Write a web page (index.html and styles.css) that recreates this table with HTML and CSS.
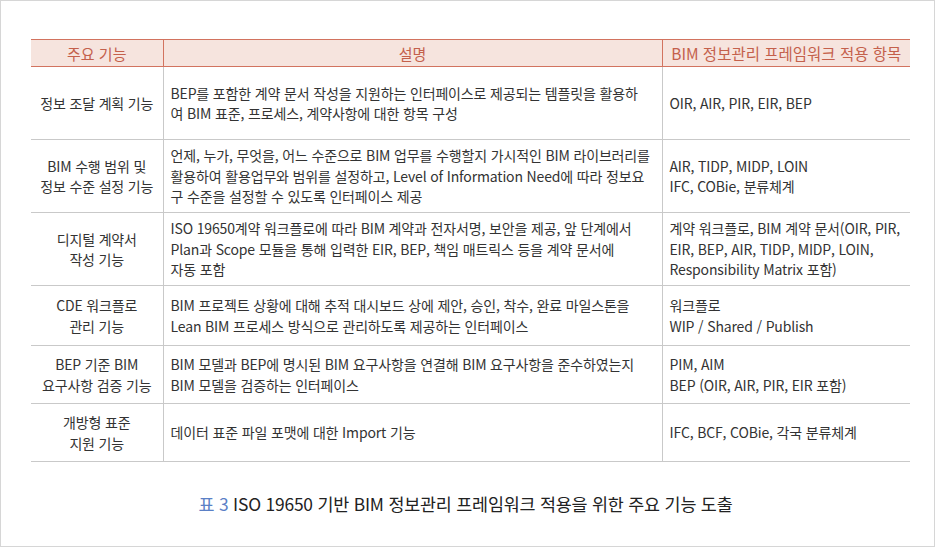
FILE: index.html
```html
<!DOCTYPE html>
<html lang="ko">
<head>
<meta charset="utf-8">
<link rel="stylesheet" href="styles.css">
</head>
<body>
<div class="frame">
  <table class="spec">
    <colgroup>
      <col class="c1"><col class="c2"><col class="c3">
    </colgroup>
    <thead>
      <tr>
        <th>주요 기능</th>
        <th>설명</th>
        <th class="wide">BIM 정보관리 프레임워크 적용 항목</th>
      </tr>
    </thead>
    <tbody>
      <tr class="r1">
        <td class="name">정보 조달 계획 기능</td>
        <td>BEP를 포함한 계약 문서 작성을 지원하는 인터페이스로 제공되는 템플릿을 활용하<br>여 BIM 표준, 프로세스, 계약사항에 대한 항목 구성</td>
        <td>OIR, AIR, PIR, EIR, BEP</td>
      </tr>
      <tr class="r2">
        <td class="name">BIM 수행 범위 및<br>정보 수준 설정 기능</td>
        <td>언제, 누가, 무엇을, 어느 수준으로 BIM 업무를 수행할지 가시적인 BIM 라이브러리를<br>활용하여 활용업무와 범위를 설정하고, Level of Information Need에 따라 정보요<br>구 수준을 설정할 수 있도록 인터페이스 제공</td>
        <td>AIR, TIDP, MIDP, LOIN<br>IFC, COBie, 분류체계</td>
      </tr>
      <tr class="r3">
        <td class="name">디지털 계약서<br>작성 기능</td>
        <td>ISO 19650계약 워크플로에 따라 BIM 계약과 전자서명, 보안을 제공, 앞 단계에서<br>Plan과 Scope 모듈을 통해 입력한 EIR, BEP, 책임 매트릭스 등을 계약 문서에<br>자동 포함</td>
        <td>계약 워크플로, BIM 계약 문서(OIR, PIR,<br>EIR, BEP, AIR, TIDP, MIDP, LOIN,<br>Responsibility Matrix 포함)</td>
      </tr>
      <tr class="r4">
        <td class="name">CDE 워크플로<br>관리 기능</td>
        <td>BIM 프로젝트 상황에 대해 추적 대시보드 상에 제안, 승인, 착수, 완료 마일스톤을<br>Lean BIM 프로세스 방식으로 관리하도록 제공하는 인터페이스</td>
        <td>워크플로<br>WIP / Shared / Publish</td>
      </tr>
      <tr class="r5">
        <td class="name">BEP 기준 BIM<br>요구사항 검증 기능</td>
        <td>BIM 모델과 BEP에 명시된 BIM 요구사항을 연결해 BIM 요구사항을 준수하였는지<br>BIM 모델을 검증하는 인터페이스</td>
        <td>PIM, AIM<br>BEP (OIR, AIR, PIR, EIR 포함)</td>
      </tr>
      <tr class="r6">
        <td class="name">개방형 표준<br>지원 기능</td>
        <td>데이터 표준 파일 포맷에 대한 Import 기능</td>
        <td>IFC, BCF, COBie, 각국 분류체계</td>
      </tr>
    </tbody>
  </table>
  <p class="caption"><span class="label">표 3</span> ISO 19650 기반 BIM 정보관리 프레임워크 적용을 위한 주요 기능 도출</p>
</div>
</body>
</html>
```

FILE: styles.css
```css
html, body {
  margin: 0;
  padding: 0;
  background: #ffffff;
}

.frame {
  box-sizing: border-box;
  width: 935px;
  height: 547px;
  border: 1px solid #d6d6d6;
  padding: 38px 24px 0 30px;
  font-family: "Noto Sans CJK KR", "Noto Sans", sans-serif;
  color: #333333;
}

.spec {
  width: 879px;
  border-collapse: collapse;
  table-layout: fixed;
  font-family: "Noto Sans CJK KR", sans-serif;
  font-size: 14px;
  letter-spacing: -0.15px;
}

.c1 { width: 132px; }
.c2 { width: 499px; }
.c3 { width: 248px; }

.spec th {
  height: 26px;
  padding: 0;
  background: #f6e4de;
  color: #c4604b;
  font-weight: normal;
  font-size: 15px;
  letter-spacing: 0;
  text-align: center;
  white-space: nowrap;
  border-top: 1px solid #d2735f;
  border-bottom: 1px solid #d2735f;
  border-left: 1px solid #d2735f;
}

.spec th.wide {
  font-size: 15.5px;
}

.spec th:first-child { border-left: none; }

.spec td {
  padding: 0 6px 0 7px;
  line-height: 20.5px;
  vertical-align: middle;
  white-space: nowrap;
  border-bottom: 1px solid #c9c9c9;
  border-left: 1px solid #c9c9c9;
}

.spec td:first-child { border-left: none; }

.spec td.name {
  text-align: center;
  padding: 0;
}

.r1 td { height: 72px; }
.r2 td { height: 72px; }
.r3 td { height: 72px; }
.r4 td { height: 59px; }
.r5 td { height: 57px; }
.r6 td { height: 57px; }

.caption {
  margin: 29px 0 0 -10px;
  text-align: center;
  font-size: 17.4px;
  color: #222222;
  letter-spacing: -0.2px;
}

.caption .label {
  color: #5b80c6;
}
```
